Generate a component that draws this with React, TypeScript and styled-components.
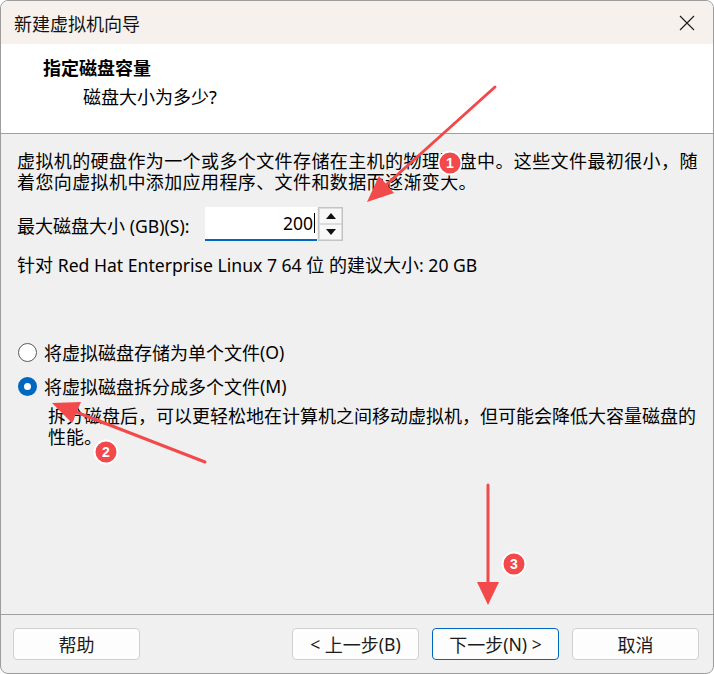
import styled, { createGlobalStyle } from 'styled-components';

const GlobalStyle = createGlobalStyle`
    html, body {
        margin: 0;
        padding: 0;
        background: #fff;
    }

    body {
        font-family: "Noto Sans", "Noto Sans CJK SC", sans-serif;
        color: #000;
    }
`;

const Page = styled.div`
    position: relative;
    width: 714px;
    height: 674px;
`;

const Window = styled.div`
    width: 714px;
    height: 674px;
    box-sizing: border-box;
    border: 1px solid #9c9c9c;
    border-radius: 8px;
    overflow: hidden;
    display: flex;
    flex-direction: column;
    background: #f0f0f0;
`;

const TitleBar = styled.div`
    height: 43px;
    flex-shrink: 0;
    display: flex;
    align-items: center;
    padding-left: 13px;
    background: #f6f1ed;
    font-size: 18px;
    color: #111;
`;

const CloseButton = styled.div`
    margin-left: auto;
    width: 52px;
    height: 43px;
    display: flex;
    align-items: center;
    justify-content: center;
`;

const Header = styled.div`
    height: 90px;
    flex-shrink: 0;
    box-sizing: border-box;
    padding: 12px 0 0 42px;
    background: #fff;
    border-bottom: 1px solid #a0a0a0;
`;

const Heading = styled.div`
    font-size: 18px;
    line-height: 24px;
    font-weight: 700;
`;

const Subheading = styled.div`
    margin: 5px 0 0 40px;
    font-size: 18px;
    line-height: 24px;
`;

const Body = styled.div`
    flex: 1;
    padding: 17px 0 0 16px;
    font-size: 18px;
`;

const Para = styled.p<{ $spacing?: number }>`
    margin: 0;
    line-height: 21px;
    letter-spacing: ${props => props.$spacing ?? 0}px;
    white-space: nowrap;
`;

// latin runs render smaller than the CJK glyphs beside them
const Lat = styled.span`
    font-size: 17.6px;
    letter-spacing: 0;
`;

const SizeRow = styled.div`
    display: flex;
    align-items: center;
    height: 34px;
    margin-top: 14px;
`;

const Label = styled.span`
    width: 188px;
    margin-top: 2px;
    white-space: nowrap;
`;

const NumberBox = styled.div`
    width: 112px;
    height: 34px;
    box-sizing: border-box;
    display: flex;
    align-items: center;
    justify-content: flex-end;
    padding: 0 2px 0 0;
    background: #fff;
    border-bottom: 2px solid #0067c0;
    font-size: 17.5px;
`;

const Caret = styled.span`
    width: 1px;
    height: 20px;
    margin-left: 1px;
    background: #000;
`;

const Spinner = styled.div`
    width: 25px;
    height: 34px;
    box-sizing: border-box;
    margin-left: 1px;
    display: flex;
    flex-direction: column;
    border: 1px solid #c4c4c4;
    background: #fbfbfb;
`;

const SpinButton = styled.div`
    flex: 1;
    display: flex;
    align-items: center;
    justify-content: center;
    border: 1px solid #dcdcdc;
    background: #f8f8f8;
`;

const Recommend = styled.div`
    margin-top: 13px;
    line-height: 22px;
    white-space: nowrap;
`;

const Options = styled.div`
    margin-top: 65px;
`;

const RadioRow = styled.div<{ $gap?: number }>`
    display: flex;
    align-items: center;
    height: 22px;
    margin-top: ${props => props.$gap ?? 0}px;
    white-space: nowrap;
`;

const Radio = styled.span<{ $checked?: boolean }>`
    width: 19px;
    height: 19px;
    box-sizing: border-box;
    margin: 0 7px 0 1px;
    border-radius: 50%;
    border: ${props => props.$checked ? '6px solid #0067c0' : '1px solid #5c5c5c'};
    background: #fff;
`;

const Description = styled(Para)`
    margin: 9px 0 0 31px;
`;

const Footer = styled.div`
    height: 59px;
    flex-shrink: 0;
    box-sizing: border-box;
    display: flex;
    padding: 13px 14px 0 12px;
    border-top: 1px solid #a0a0a0;
`;

const Spacer = styled.div`
    flex: 1;
`;

const Button = styled.div<{ $primary?: boolean }>`
    width: 127px;
    height: 32px;
    box-sizing: border-box;
    margin-left: ${props => props.$primary === undefined ? 0 : 13}px;
    display: flex;
    align-items: center;
    justify-content: center;
    background: #fdfdfd;
    border: 1px solid ${props => props.$primary ? '#0067c0' : '#d0d0d0'};
    border-radius: 4px;
    font-size: 18px;
    color: #1b1b1b;
    white-space: pre;
`;

const Annotations = styled.svg`
    position: absolute;
    top: 0;
    left: 0;
    pointer-events: none;
`;

const RED = '#f24a4a';

const Badge = ({ x, y, n }: { x: number; y: number; n: number }) => (
    <g>
        <circle cx={x} cy={y} r={11.5} fill={RED} stroke="#fff" strokeWidth={2} />
        <text x={x} y={y + 5} textAnchor="middle" fontSize={14} fontWeight={700}
            fontFamily="Liberation Sans, sans-serif" fill="#fff">{n}</text>
    </g>
);

const App = () => (
    <Page>
        <GlobalStyle />
        <Window>
            <TitleBar>
                新建虚拟机向导
                <CloseButton>
                    <svg width="16" height="16" viewBox="0 0 16 16">
                        <path d="M1 1 L15 15 M15 1 L1 15" stroke="#1a1a1a" strokeWidth="1.1" />
                    </svg>
                </CloseButton>
            </TitleBar>
            <Header>
                <Heading>指定磁盘容量</Heading>
                <Subheading>磁盘大小为多少?</Subheading>
            </Header>
            <Body>
                <Para $spacing={0.4}>
                    虚拟机的硬盘作为一个或多个文件存储在主机的物理磁盘中。这些文件最初很小，随<br />
                    着您向虚拟机中添加应用程序、文件和数据而逐渐变大。
                </Para>
                <SizeRow>
                    <Label>最大磁盘大小 <Lat>(GB)(S):</Lat></Label>
                    <NumberBox>200<Caret /></NumberBox>
                    <Spinner>
                        <SpinButton>
                            <svg width="10" height="6" viewBox="0 0 10 6">
                                <polygon points="5,0 10,6 0,6" fill="#111" />
                            </svg>
                        </SpinButton>
                        <SpinButton>
                            <svg width="10" height="6" viewBox="0 0 10 6">
                                <polygon points="0,0 10,0 5,6" fill="#111" />
                            </svg>
                        </SpinButton>
                    </Spinner>
                </SizeRow>
                <Recommend>
                    针对 <Lat>Red Hat Enterprise Linux 7 64</Lat> 位 的建议大小<Lat>: 20 GB</Lat>
                </Recommend>
                <Options>
                    <RadioRow>
                        <Radio />将虚拟磁盘存储为单个文件<Lat>(O)</Lat>
                    </RadioRow>
                    <RadioRow $gap={12}>
                        <Radio $checked />将虚拟磁盘拆分成多个文件<Lat>(M)</Lat>
                    </RadioRow>
                    <Description>
                        拆分磁盘后，可以更轻松地在计算机之间移动虚拟机，但可能会降低大容量磁盘的<br />
                        性能。
                    </Description>
                </Options>
            </Body>
            <Footer>
                <Button>帮助</Button>
                <Spacer />
                <Button $primary={false}><Lat>&lt; </Lat>上一步<Lat>(B)</Lat></Button>
                <Button $primary>下一步<Lat>(N) &gt;</Lat></Button>
                <Button $primary={false}>取消</Button>
            </Footer>
        </Window>
        <Annotations width="714" height="674" viewBox="0 0 714 674">
            <line x1="495" y1="87" x2="386" y2="185" stroke={RED} strokeWidth="3" strokeLinecap="round" />
            <polygon points="367,202 394,193 379,176" fill={RED} />
            <line x1="205" y1="462" x2="76" y2="412" stroke={RED} strokeWidth="3" strokeLinecap="round" />
            <polygon points="52,403 72,423 81,402" fill={RED} />
            <line x1="488" y1="485" x2="488" y2="584" stroke={RED} strokeWidth="3" strokeLinecap="round" />
            <polygon points="477,582 499,582 488,605" fill={RED} />
            <Badge x={450} y={163} n={1} />
            <Badge x={106} y={452} n={2} />
            <Badge x={514} y={564} n={3} />
        </Annotations>
    </Page>
);

export default App;
